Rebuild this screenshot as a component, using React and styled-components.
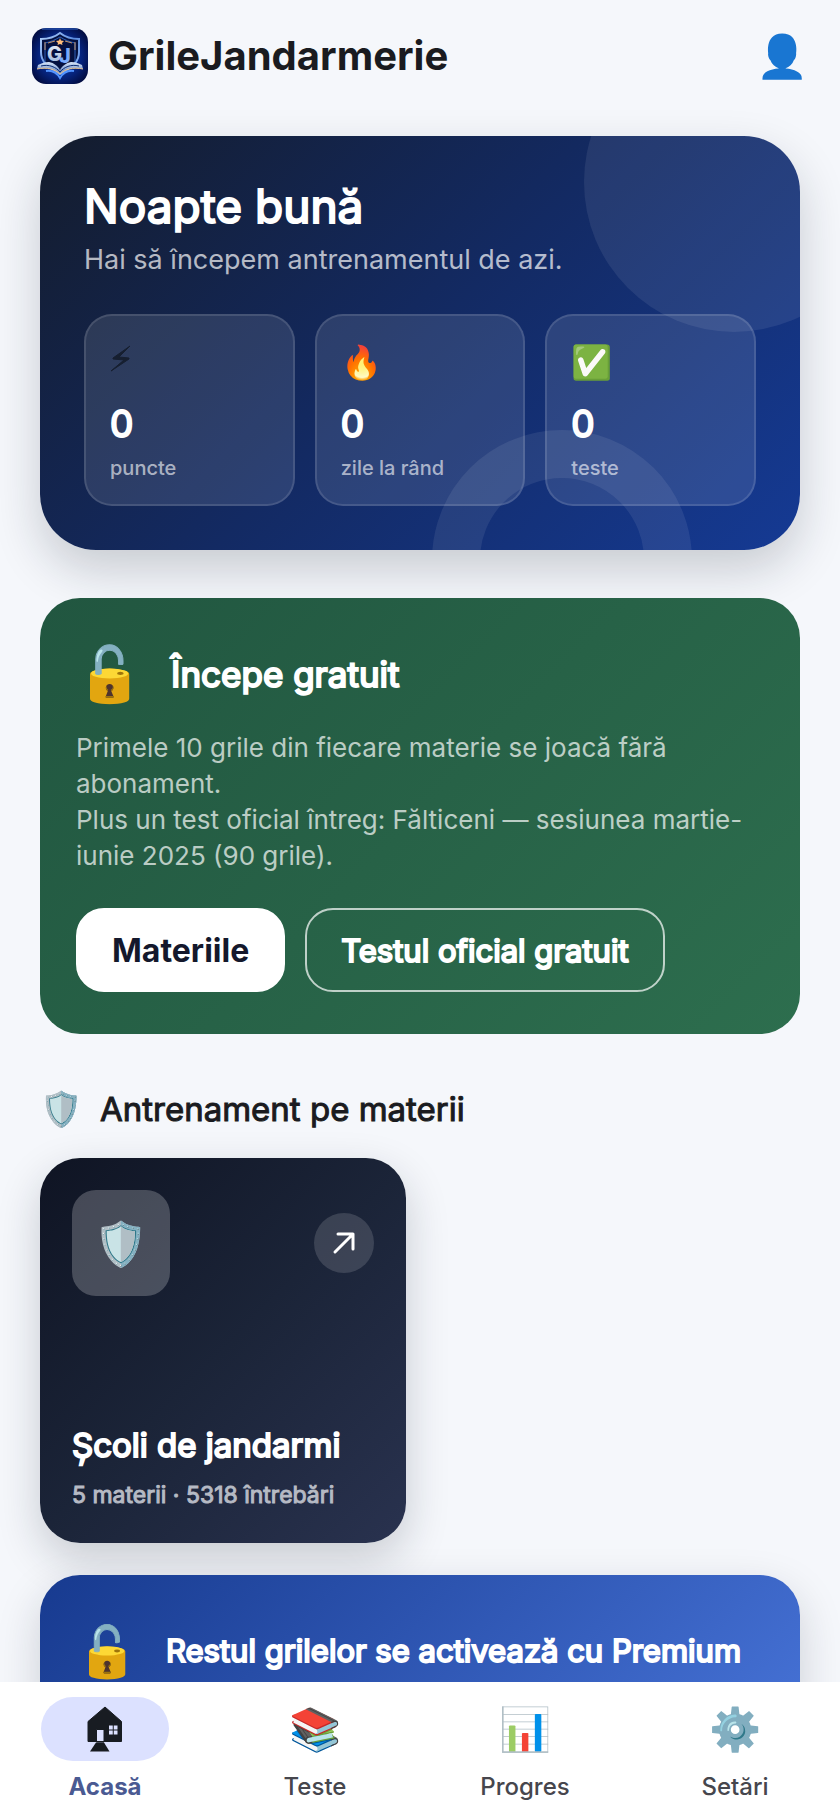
import React from 'react'
import styled, { createGlobalStyle, css } from 'styled-components'

const GlobalStyle = createGlobalStyle`
    * { box-sizing: border-box; }

    body {
        margin: 0;
        background: #f5f7fb;
        color: #1a1b20;
        font-family: Inter, "Liberation Sans", sans-serif;
    }

    h1, h2, h3, p { margin: 0; }

    button { font-family: inherit; cursor: pointer; }
`

// regular cut with a thickened outline, used for all the card titles
const heavy = css`
    font-weight: 400;
    -webkit-text-stroke: ${({ $stroke }) => $stroke || 1}px currentColor;
`

const Screen = styled.div`
    display: flex;
    flex-direction: column;
    height: 100vh;
`

const Scroll = styled.div`
    flex: 1;
    min-height: 0;
    overflow-y: auto;
    scrollbar-width: none;
`

const Header = styled.header`
    display: flex;
    align-items: center;
    gap: 20px;
    padding: 28px 32px;

    h1 {
        flex: 1;
        font-size: 40px;
        line-height: 56px;
        font-weight: 700;
    }
`

const LogoArt = styled.svg`
    width: 56px;
    height: 56px;
    border-radius: 14px;
`

const ProfileButton = styled.button`
    border: 0;
    padding: 0;
    background: none;
    font-size: 42px;
    line-height: 48px;
`

const Content = styled.main`
    display: flex;
    flex-direction: column;
    padding: 24px 40px 40px;
`

const Hero = styled.section`
    border-radius: 56px;
    box-shadow: 0 20px 48px rgba(20, 28, 44, 0.2);
`

const HeroBody = styled.div`
    position: relative;
    overflow: hidden;
    padding: 40px 44px 44px;
    border-radius: 56px;
    color: #fff;
    background: linear-gradient(135deg, #141c2c 0%, #132a63 50%, #153a94 100%);

    p {
        margin-top: 4px;
        font-size: 27px;
        line-height: 40px;
        color: rgba(255, 255, 255, 0.7);
    }
`

const HeroTitle = styled.h2`
    font-size: 46px;
    line-height: 60px;
    ${heavy}
`

const Disc = styled.div`
    position: absolute;
    top: -104px;
    right: -84px;
    width: 300px;
    height: 300px;
    border-radius: 50%;
    background: rgba(255, 255, 255, 0.08);
`

const Ring = styled.div`
    position: absolute;
    bottom: -140px;
    right: 108px;
    width: 260px;
    height: 260px;
    border-radius: 50%;
    border: 48px solid rgba(255, 255, 255, 0.08);
`

const Stats = styled.div`
    position: relative;
    display: grid;
    grid-template-columns: repeat(3, 1fr);
    gap: 20px;
    margin-top: 34px;
`

const Stat = styled.div`
    display: flex;
    flex-direction: column;
    padding: 24px 24px 20px;
    border: 2px solid rgba(255, 255, 255, 0.12);
    border-radius: 28px;
    background: rgba(255, 255, 255, 0.11);
`

const StatIcon = styled.span`
    height: 44px;
    font-size: 33px;
    line-height: 44px;

    svg {
        display: block;
        width: 22px;
        height: 40px;
    }
`

const StatValue = styled.span`
    margin-top: 18px;
    font-size: 37px;
    line-height: 44px;
    ${heavy}
`

const StatLabel = styled.span`
    margin-top: 8px;
    padding-bottom: 2px;
    font-size: 20px;
    line-height: 28px;
    font-weight: 500;
    color: rgba(255, 255, 255, 0.62);
`

const Card = styled.section`
    margin-top: ${({ $gap }) => $gap}px;
    padding: 36px 36px 42px;
    border-radius: 40px;
    color: #fff;
    background: linear-gradient(135deg, ${({ $from, $to }) => `${$from}, ${$to}`});
    box-shadow: ${({ $raised }) => ($raised ? '0 16px 44px rgba(20, 28, 44, 0.18)' : 'none')};

    p {
        margin-top: 16px;
        font-size: 26px;
        line-height: 36px;
        color: rgba(255, 255, 255, 0.7);
    }
`

const CardHead = styled.div`
    display: flex;
    align-items: center;
    gap: 28px;
    min-height: 80px;
`

const Emoji = styled.span`
    flex: none;
    font-size: ${({ $size }) => $size}px;
    line-height: ${({ $line }) => $line}px;
`

const CardTitle = styled.h3`
    font-size: ${({ $size }) => $size}px;
    line-height: 44px;
    ${heavy}
`

const Actions = styled.div`
    display: flex;
    flex-wrap: wrap;
    gap: 20px;
    margin-top: 34px;
`

const Action = styled.button`
    height: 84px;
    padding: 0 34px;
    border: 2px solid #fff;
    border-radius: 28px;
    background: #fff;
    color: #14182c;
    font-size: 32px;
    font-weight: 700;
`

const OutlinedAction = styled(Action)`
    border-color: rgba(255, 255, 255, 0.7);
    background: transparent;
    color: #fff;
    font-size: 31px;
    ${heavy}
`

const SectionTitle = styled.h2`
    display: flex;
    align-items: center;
    gap: 18px;
    margin: 50px 0 24px;
    font-size: 33px;
    line-height: 50px;
    ${heavy}

    span {
        font-size: 34px;
        line-height: 50px;
    }
`

const Tiles = styled.div`
    display: grid;
    grid-template-columns: repeat(2, 1fr);
    gap: 28px;
`

const Tile = styled.button`
    display: flex;
    flex-direction: column;
    padding: 32px;
    border: 0;
    border-radius: 40px;
    color: #fff;
    text-align: left;
    background: linear-gradient(135deg, #0f1423, #1b2438 50%, #29324f);
    box-shadow: 0 16px 44px rgba(20, 28, 44, 0.2);
`

const TileTop = styled.span`
    display: flex;
    align-items: center;
    justify-content: space-between;
    width: 100%;
    margin-bottom: 127px;
`

const TileIcon = styled.span`
    display: grid;
    place-items: center;
    width: 98px;
    border-radius: 24px;
    background: rgba(255, 255, 255, 0.22);
    font-size: 43px;
    line-height: 106px;
`

const TileArrow = styled.span`
    display: grid;
    place-items: center;
    width: 60px;
    height: 60px;
    border-radius: 50%;
    background: rgba(255, 255, 255, 0.14);
`

const TileTitle = styled.span`
    font-size: 33px;
    line-height: 44px;
    ${heavy}
`

const TileMeta = styled.span`
    margin-top: 12px;
    font-size: 23px;
    line-height: 32px;
    color: #b6bac4;
    ${heavy}
`

const Nav = styled.nav`
    display: grid;
    grid-template-columns: repeat(4, 1fr);
    padding: 15px 0;
    background: #fff;
`

const NavItem = styled.button`
    display: flex;
    flex-direction: column;
    align-items: center;
    gap: 10px;
    padding: 0;
    border: 0;
    background: none;
    color: ${({ $active }) => ($active ? '#4a5a92' : '#46464d')};
    font-size: 24px;
    line-height: 32px;
    font-weight: ${({ $active }) => ($active ? 700 : 500)};
`

const NavIcon = styled.span`
    display: grid;
    place-items: center;
    width: 128px;
    height: 64px;
    border-radius: 32px;
    background: ${({ $active }) => ($active ? '#dce1ff' : 'transparent')};
    font-size: 42px;
    line-height: 64px;
`

const Logo = () => (
    <LogoArt viewBox="0 0 56 56" aria-hidden="true">
        <defs>
            <radialGradient id="sky" cx="50%" cy="50%" r="60%">
                <stop offset="0" stopColor="#1250c8" />
                <stop offset="0.65" stopColor="#06237c" />
                <stop offset="1" stopColor="#020c40" />
            </radialGradient>
            <linearGradient id="steel" x1="0" y1="0" x2="1" y2="1">
                <stop offset="0" stopColor="#b5d2fa" />
                <stop offset="0.5" stopColor="#5c8de0" />
                <stop offset="1" stopColor="#8fb8fa" />
            </linearGradient>
            <linearGradient id="letter" x1="0" y1="0" x2="0" y2="1">
                <stop offset="0" stopColor="#f1f5fb" />
                <stop offset="1" stopColor="#93aed6" />
            </linearGradient>
            <linearGradient id="page" x1="0" y1="0" x2="0" y2="1">
                <stop offset="0" stopColor="#dbe8fb" />
                <stop offset="1" stopColor="#4a70b4" />
            </linearGradient>
        </defs>
        <rect width="56" height="56" fill="url(#sky)" />
        <path d="M10 1H46" stroke="#3d7bea" strokeWidth="1" opacity="0.8" />
        <path
            d="M28 5C23 9 16 11 9 11V24C9 32 13 38 28 46C43 38 47 32 47 24V11C40 11 33 9 28 5Z"
            fill="#04103f" stroke="url(#steel)" strokeWidth="2"
        />
        <path d="M13 34V15C18 14 23 12 28 9C33 12 38 14 43 15V34" fill="none" stroke="#2f5fb8" strokeWidth="1" />
        <path d="M16 15L23 13M33 13L40 15M13 14V22M43 14V22" stroke="#c4966c" strokeWidth="1" />
        <path d="M28 10L29 12.500L32 13L30 15L30.500 17L28 16L25.500 17L26 15L24 13L27 12.500Z" fill="#ffbd79" />
        <path d="M6 37C10 35 13 34 17 34C22 35 26 38 28 42C30 38 34 35 39 34C43 34 46 35 50 37L51 41C41 39 33 41 28 46C23 41 15 39 5 41Z" fill="url(#page)" />
        <path d="M5 41C15 39 23 41 28 46C33 41 41 39 51 41" fill="none" stroke="#ecc28c" strokeWidth="1" />
        <path d="M9 38C17 36 24 39 28 44C32 39 39 36 47 38" fill="none" stroke="#0b2a70" strokeWidth="1" />
        <path d="M14 43C20 42 25 45 28 50C31 45 36 42 42 43" fill="none" stroke="#5193ff" strokeWidth="2" />
        <text x="15" y="33" fontFamily="Inter, sans-serif" fontSize="20" fontWeight="800" fill="url(#letter)">G</text>
        <text x="27" y="35" fontFamily="Inter, sans-serif" fontSize="20" fontWeight="800" fill="#78a9fb">J</text>
    </LogoArt>
)

const Bolt = () => (
    <svg viewBox="0 0 22 40" aria-hidden="true">
        <path d="M20 6L3 18V19L14 20L1 31L19 19V18L9 17Z" fill="#161f30" stroke="#161f30" strokeWidth="1" strokeLinejoin="round" />
    </svg>
)

const House = () => (
    <svg width="36" height="46" viewBox="0 0 36 46" aria-hidden="true">
        <path
            fillRule="evenodd" fill="#181c22" stroke="#181c22" strokeWidth="1" strokeLinejoin="round"
            d="M18 1L34.500 15.500V35.500H1V15.500ZM9.500 23.500V36H17V23.500ZM21.500 19V29H31V19Z"
        />
        <path d="M26.250 19V29M21.500 24H31" stroke="#181c22" strokeWidth="1" />
        <path d="M9 36.500H17L22.500 45.500H3Z" fill="#181c22" />
    </svg>
)

const Arrow = () => (
    <svg width="24" height="24" viewBox="0 0 24 24" aria-hidden="true">
        <path d="M3 21L21 3M6 3H21V18" fill="none" stroke="#fff" strokeWidth="3" strokeLinecap="round" strokeLinejoin="round" />
    </svg>
)

const stats = [
    { icon: <Bolt />, value: 0, label: 'puncte' },
    { icon: '🔥', value: 0, label: 'zile la rând' },
    { icon: '✅', value: 0, label: 'teste' },
]

const tabs = [
    { icon: <House />, label: 'Acasă', active: true },
    { icon: '📚', label: 'Teste' },
    { icon: '📊', label: 'Progres' },
    { icon: '⚙️', label: 'Setări' },
]

const App = () => {
    const statCards = stats.map( (stat) => (
        <Stat key={stat.label}>
            <StatIcon>{stat.icon}</StatIcon>
            <StatValue $stroke={2}>{stat.value}</StatValue>
            <StatLabel>{stat.label}</StatLabel>
        </Stat>
    ))

    const navItems = tabs.map( (tab) => (
        <NavItem key={tab.label} $active={tab.active} aria-current={tab.active ? 'page' : undefined}>
            <NavIcon $active={tab.active}>{tab.icon}</NavIcon>
            {tab.label}
        </NavItem>
    ))

    return (
        <Screen>
            <GlobalStyle />
            <Scroll>
                <Header>
                    <Logo />
                    <h1>GrileJandarmerie</h1>
                    <ProfileButton aria-label="Profil">👤</ProfileButton>
                </Header>
                <Content>
                    <Hero>
                        <HeroBody>
                            <Disc />
                            <Ring />
                            <HeroTitle $stroke={2}>Noapte bună</HeroTitle>
                            <p>Hai să începem antrenamentul de azi.</p>
                            <Stats>{statCards}</Stats>
                        </HeroBody>
                    </Hero>
                    <Card $gap={48} $from="#215640" $to="#2d6e4e">
                        <CardHead>
                            <Emoji $size={54} $line={80}>🔓</Emoji>
                            <CardTitle $size={35} $stroke={2}>Începe gratuit</CardTitle>
                        </CardHead>
                        <p>
                            Primele 10 grile din fiecare materie se joacă fără abonament.<br />
                            Plus un test oficial întreg: Fălticeni — sesiunea martie-iunie 2025 (90 grile).
                        </p>
                        <Actions>
                            <Action>Materiile</Action>
                            <OutlinedAction $stroke={2}>Testul oficial gratuit</OutlinedAction>
                        </Actions>
                    </Card>
                    <SectionTitle><span>🛡️</span>Antrenament pe materii</SectionTitle>
                    <Tiles>
                        <Tile>
                            <TileTop>
                                <TileIcon>🛡️</TileIcon>
                                <TileArrow><Arrow /></TileArrow>
                            </TileTop>
                            <TileTitle $stroke={2}>Școli de jandarmi</TileTitle>
                            <TileMeta>5 materii · 5318 întrebări</TileMeta>
                        </Tile>
                    </Tiles>
                    <Card $gap={32} $raised $from="#173a8f" $to="#4672d6">
                        <CardHead>
                            <Emoji $size={50} $line={72}>🔓</Emoji>
                            <CardTitle $size={31} $stroke={2}>Restul grilelor se activează cu Premium</CardTitle>
                        </CardHead>
                    </Card>
                </Content>
            </Scroll>
            <Nav>{navItems}</Nav>
        </Screen>
    )
}

export default App
